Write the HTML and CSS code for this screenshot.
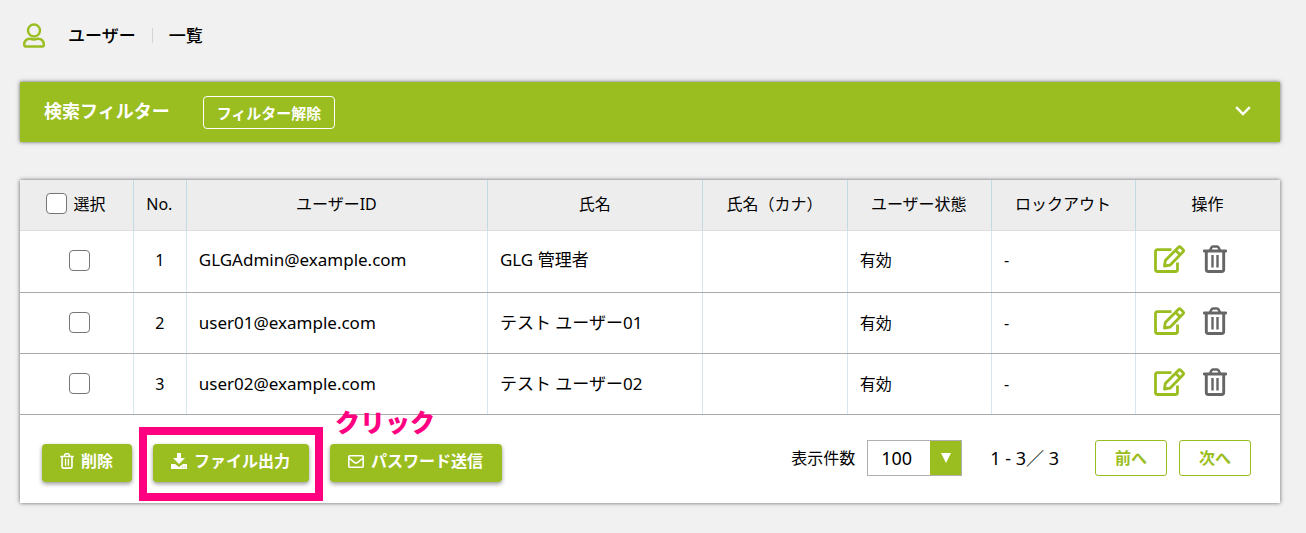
FILE: index.html
```html
<!DOCTYPE html>
<html lang="ja">
<head>
<meta charset="utf-8">
<title>ユーザー一覧</title>
<link rel="stylesheet" href="styles.css">
</head>
<body>
<svg class="sprite" aria-hidden="true">
  <symbol id="trash" viewBox="0 0 24 28">
    <g fill="none" stroke="currentColor">
      <path d="M1.200 6h21.600" stroke-width="2.800" stroke-linecap="round"/>
      <path d="M7 5.500l1.400-3q.5-1 1.600-1h4q1.100 0 1.600 1l1.400 3" stroke-width="2.600"/>
      <path d="M3.300 6v18.200q0 2.300 2 2.300h13.400q2 0 2-2.300V6" stroke-width="2.900"/>
      <path d="M9.500 10v12.500M14.500 10v12.500" stroke-width="2.400"/>
    </g>
  </symbol>
  <symbol id="edit" viewBox="0 0 31 28">
    <g fill="none" stroke="currentColor" stroke-width="2.800" stroke-linejoin="round">
      <path d="M17.500 4.700H3.500q-2 0-2 2v17.800q0 2 2 2h18q2 0 2-2v-7"/>
      <path d="M10.500 21l.8-5.600L24.300 2.400q1.300-1.300 2.600 0l2 2q1.300 1.300 0 2.600L16 20.200z"/>
      <path d="M21.500 5.200l4.600 4.600"/>
    </g>
  </symbol>
</svg>

<header class="page-head">
  <svg class="user-icon" viewBox="0 0 22 25" fill="none" stroke="currentColor" stroke-width="2.400">
    <circle cx="11" cy="7.500" r="6"/>
    <path d="M7.200 15.700q3.800 1.600 7.600 0 6 .2 6 6v.4q0 1.400-1.400 1.400H2.600q-1.400 0-1.400-1.400v-.4q0-5.800 6-6z"/>
  </svg>
  <h1 class="crumb">ユーザー</h1>
  <span class="crumb crumb-sub">一覧</span>
</header>

<section class="filter">
  <h2 class="filter-title">検索フィルター</h2>
  <button class="filter-clear" type="button">フィルター解除</button>
  <button class="filter-toggle" type="button" aria-label="開く">
    <svg class="chevron" viewBox="0 0 16 10" fill="none" stroke="currentColor" stroke-width="2.400"><path d="M1.200 1.200L8 8l6.800-6.800"/></svg>
  </button>
</section>

<main class="card">
  <table class="users">
    <colgroup>
      <col class="c-check"><col class="c-no"><col class="c-id"><col class="c-name">
      <col class="c-std"><col class="c-std"><col class="c-std"><col class="c-std">
    </colgroup>
    <thead>
      <tr>
        <th><label class="check-all"><input class="check" type="checkbox">選択</label></th>
        <th>No.</th><th>ユーザーID</th><th>氏名</th><th>氏名（カナ）</th><th>ユーザー状態</th><th>ロックアウト</th><th>操作</th>
      </tr>
    </thead>
    <tbody>
      <tr>
        <td class="pick"><input class="check" type="checkbox" aria-label="1を選択"></td>
        <td class="center">1</td><td class="wide">GLGAdmin@example.com</td><td class="wide">GLG 管理者</td><td></td><td>有効</td><td>-</td>
        <td><div class="actions"><button class="act edit" type="button" aria-label="編集"><svg class="edit-icon"><use href="#edit"/></svg></button><button class="act" type="button" aria-label="削除"><svg class="trash-icon"><use href="#trash"/></svg></button></div></td>
      </tr>
      <tr>
        <td class="pick"><input class="check" type="checkbox" aria-label="2を選択"></td>
        <td class="center">2</td><td class="wide">user01@example.com</td><td class="wide">テスト ユーザー01</td><td></td><td>有効</td><td>-</td>
        <td><div class="actions"><button class="act edit" type="button" aria-label="編集"><svg class="edit-icon"><use href="#edit"/></svg></button><button class="act" type="button" aria-label="削除"><svg class="trash-icon"><use href="#trash"/></svg></button></div></td>
      </tr>
      <tr>
        <td class="pick"><input class="check" type="checkbox" aria-label="3を選択"></td>
        <td class="center">3</td><td class="wide">user02@example.com</td><td class="wide">テスト ユーザー02</td><td></td><td>有効</td><td>-</td>
        <td><div class="actions"><button class="act edit" type="button" aria-label="編集"><svg class="edit-icon"><use href="#edit"/></svg></button><button class="act" type="button" aria-label="削除"><svg class="trash-icon"><use href="#trash"/></svg></button></div></td>
      </tr>
    </tbody>
  </table>

  <footer class="card-foot">
    <div class="bulk">
      <button class="btn" type="button"><svg class="btn-icon btn-trash"><use href="#trash"/></svg>削除</button>
      <div class="marked">
        <button class="btn" type="button"><svg class="btn-icon" viewBox="0 0 16 16" fill="currentColor"><path d="M6 0h4v5h4l-6 6-6-6h4z"/><path fill-rule="evenodd" d="M0 11h4l4 3 4-3h4v5H0zM11 13.500v1h1v-1zM13.500 13.500v1h1v-1z"/></svg>ファイル出力</button>
        <span class="mark-box"></span>
        <span class="mark-text">クリック</span>
      </div>
      <button class="btn" type="button"><svg class="btn-icon" viewBox="0 0 16 16" fill="none" stroke="currentColor" stroke-width="1.600"><rect x=".8" y="2.800" width="14.400" height="11.400" rx="1"/><path d="M1 5l5.500 4.500q1.500 1 3 0L15 5"/></svg>パスワード送信</button>
    </div>
    <div class="pager">
      <label for="size">表示件数</label>
      <div class="size-wrap">
        <select class="size" id="size"><option>100</option></select>
        <span class="size-arrow"><svg class="size-tri" viewBox="0 0 10 10" fill="currentColor"><path d="M0 0h10L5 10z"/></svg></span>
      </div>
      <span class="range">1 - 3／ 3</span>
      <button class="page-btn" type="button">前へ</button>
      <button class="page-btn" type="button">次へ</button>
    </div>
  </footer>
</main>
</body>
</html>
```
FILE: styles.css
```css
* { box-sizing: border-box; }
body {
  margin: 0;
  padding: 16px 26px 30px 20px;
  background: #f1f1f1;
  color: #000;
  font: 16px/24px "Noto Sans", "Noto Sans CJK JP", sans-serif;
}
button, select, input { font: inherit; margin: 0; }
button { cursor: pointer; }
.sprite { position: absolute; width: 0; height: 0; }

.page-head { display: flex; align-items: center; height: 38px; padding-left: 3px; }
.user-icon { width: 22px; height: 25px; margin-right: 23px; color: #9abd20; }
.crumb { margin: 0; font-size: 17px; font-weight: 500; font-family: "Noto Sans CJK JP", sans-serif; line-height: 24px; }
.crumb-sub { display: flex; align-items: center; gap: 16px; margin-left: 16px; }
.crumb-sub::before { content: ""; width: 1px; height: 15px; background: #d4d4d4; }

.filter {
  display: flex;
  align-items: center;
  height: 60px;
  margin-top: 28px;
  padding: 0 29px 2px 24px;
  background: #9abd20;
  color: #fff;
  box-shadow: 0 0 4px rgba(0, 0, 0, .6);
}
.filter-title { margin: 0; font-size: 18px; line-height: 24px; font-weight: 700; }
.filter-clear {
  height: 33px;
  margin: 3px 0 0 33px;
  padding: 0 13px;
  border: 1px solid #fff;
  border-radius: 4px;
  background: none;
  color: #fff;
  font-size: 15px;
  font-weight: 700;
}
.filter-toggle { display: flex; margin-left: auto; padding: 0; border: 0; background: none; color: #fff; }
.chevron { width: 16px; height: 10px; }

.card { margin-top: 38px; background: #fff; box-shadow: 0 0 4px rgba(0, 0, 0, .6); }
.users { width: 100%; table-layout: fixed; border-collapse: collapse; }
.c-check { width: 9%; }
.c-no { width: 4.200%; }
.c-id { width: 23.900%; }
.c-name { width: 17.100%; }
.c-std { width: 11.450%; }
.users th { height: 50px; padding: 0 1px 2px 0; background: #ededed; font-weight: 400; border-bottom: 1px solid #ddd; }
.users th + th { border-left: 1px solid #c3d9e4; }
.users td { height: 61px; padding: 0 12px; border-bottom: 1px solid #aaa; }
.users tbody tr:first-child td { height: 62px; padding-bottom: 2px; }
.users td + td { border-left: 1px solid #d6e6ee; }
.users .center { padding: 0; text-align: center; }
.users .pick { padding: 0 0 0 6px; text-align: center; line-height: 0; }
.users .wide { font-size: 17px; }
.check-all { display: flex; align-items: center; justify-content: center; gap: 6px; }
.check {
  appearance: none;
  display: inline-block;
  width: 21px;
  height: 21px;
  border: 1px solid #767676;
  border-radius: 4px;
  background: #fff;
  vertical-align: middle;
}
.check:checked { background: #9abd20; }
.actions { display: flex; align-items: center; gap: 18px; padding: 0 0 3px 6px; }
.act { display: flex; padding: 0; border: 0; background: none; color: #666; }
.edit { color: #9abd20; }
.edit-icon { width: 31px; height: 28px; }
.trash-icon { width: 24px; height: 28px; }

.card-foot { display: flex; align-items: flex-start; justify-content: space-between; padding: 25px 29px 21px 22px; }
.bulk { display: flex; gap: 21px; padding-top: 4px; }
.btn {
  display: flex;
  align-items: center;
  gap: 7px;
  height: 38px;
  padding: 0 19px 4px 18px;
  border: 0;
  border-radius: 4px;
  background: #9abd20;
  color: #fff;
  font-weight: 700;
  box-shadow: 0 2px 4px rgba(0, 0, 0, .4);
}
.btn-icon { width: 16px; height: 16px; }
.btn-trash { width: 14px; }
.marked { position: relative; }
.mark-box { position: absolute; inset: -17px -14px -19px; border: 8px solid #ff0080; pointer-events: none; }
.mark-text {
  position: absolute;
  left: 182px;
  top: -42px;
  color: #ff0080;
  font-size: 25px;
  line-height: 38px;
  font-weight: 900;
  font-family: "Noto Sans CJK JP", sans-serif;
  white-space: nowrap;
  pointer-events: none;
}

.pager { display: flex; align-items: center; gap: 12px; }
.size-wrap { position: relative; width: 95px; height: 36px; }
.size { appearance: none; width: 100%; height: 100%; padding: 0 36px 0 13px; border: 1px solid #b0b0b0; border-radius: 0; background: #fff; color: #000; font-size: 18px; }
.size-arrow { position: absolute; inset: 1px 1px 1px auto; width: 31px; display: flex; align-items: center; justify-content: center; background: #9abd20; color: #fff; pointer-events: none; }
.size-tri { width: 10px; height: 10px; }
.range { margin: 0 24px 0 16px; font-size: 18px; }
.page-btn { width: 72px; height: 36px; padding: 0; border: 1px solid #9abd20; border-radius: 3px; background: #fff; color: #9abd20; font-weight: 700; }
```
